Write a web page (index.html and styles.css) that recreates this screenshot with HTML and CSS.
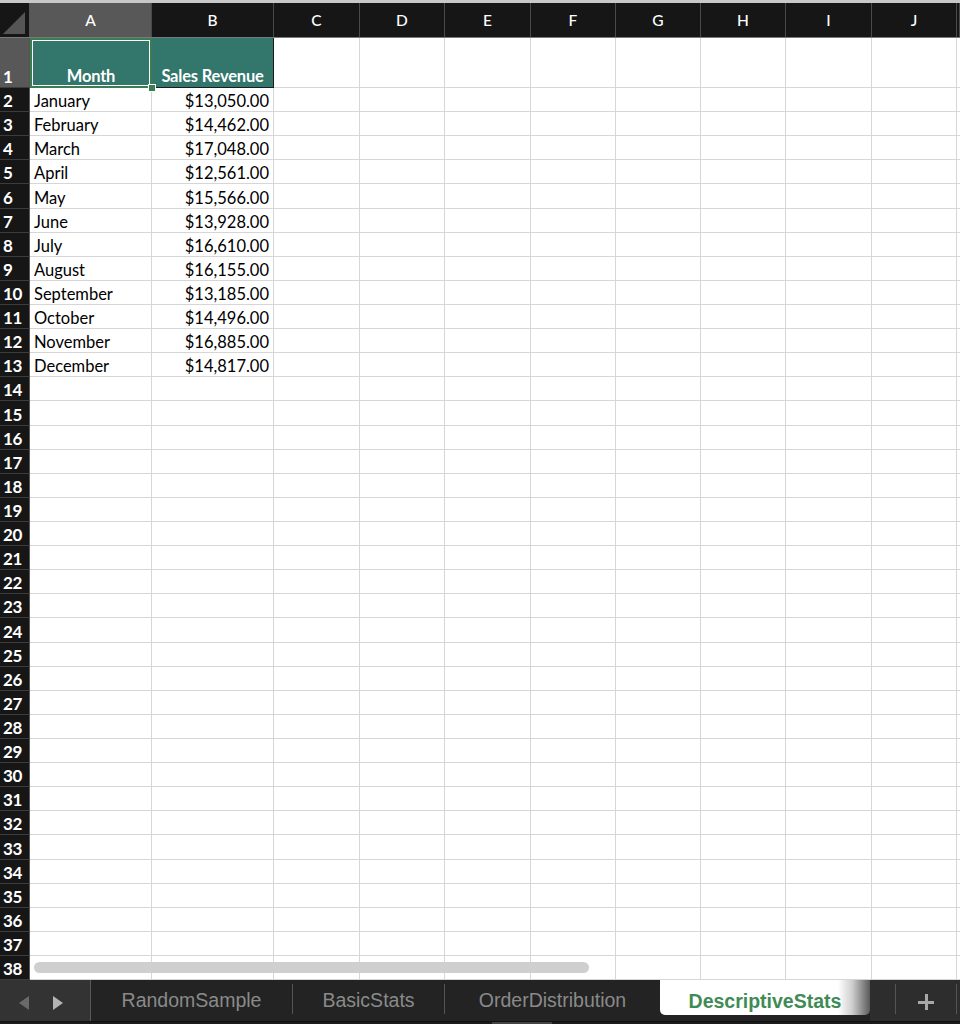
FILE: index.html
```html
<!DOCTYPE html>
<html>
<head>
<meta charset="utf-8">
<link rel="stylesheet" href="styles.css">
</head>
<body>
<div class="app">
  <div class="topstrip"></div>
  <div class="sheet">
    <div class="hdr">
      <div class="corner"><span class="tri"></span></div>
      <div class="ch sel">A</div><div class="ch">B</div><div class="ch">C</div><div class="ch">D</div><div class="ch">E</div><div class="ch">F</div><div class="ch">G</div><div class="ch">H</div><div class="ch">I</div><div class="ch">J</div><div class="ch"></div>
    </div>
    <div class="row row1">
      <div class="rh sel">1</div>
      <div class="cell th active">Month</div>
      <div class="cell th">Sales Revenue</div>
      <div class="cell"></div><div class="cell"></div><div class="cell"></div><div class="cell"></div><div class="cell"></div><div class="cell"></div><div class="cell"></div><div class="cell"></div><div class="cell"></div>
      <span class="handle"></span>
    </div>
    <div class="row"><div class="rh">2</div><div class="cell">January</div><div class="cell num">$13,050.00</div><div class="cell"></div><div class="cell"></div><div class="cell"></div><div class="cell"></div><div class="cell"></div><div class="cell"></div><div class="cell"></div><div class="cell"></div><div class="cell"></div></div>
    <div class="row"><div class="rh">3</div><div class="cell">February</div><div class="cell num">$14,462.00</div><div class="cell"></div><div class="cell"></div><div class="cell"></div><div class="cell"></div><div class="cell"></div><div class="cell"></div><div class="cell"></div><div class="cell"></div><div class="cell"></div></div>
    <div class="row"><div class="rh">4</div><div class="cell">March</div><div class="cell num">$17,048.00</div><div class="cell"></div><div class="cell"></div><div class="cell"></div><div class="cell"></div><div class="cell"></div><div class="cell"></div><div class="cell"></div><div class="cell"></div><div class="cell"></div></div>
    <div class="row"><div class="rh">5</div><div class="cell">April</div><div class="cell num">$12,561.00</div><div class="cell"></div><div class="cell"></div><div class="cell"></div><div class="cell"></div><div class="cell"></div><div class="cell"></div><div class="cell"></div><div class="cell"></div><div class="cell"></div></div>
    <div class="row"><div class="rh">6</div><div class="cell">May</div><div class="cell num">$15,566.00</div><div class="cell"></div><div class="cell"></div><div class="cell"></div><div class="cell"></div><div class="cell"></div><div class="cell"></div><div class="cell"></div><div class="cell"></div><div class="cell"></div></div>
    <div class="row"><div class="rh">7</div><div class="cell">June</div><div class="cell num">$13,928.00</div><div class="cell"></div><div class="cell"></div><div class="cell"></div><div class="cell"></div><div class="cell"></div><div class="cell"></div><div class="cell"></div><div class="cell"></div><div class="cell"></div></div>
    <div class="row"><div class="rh">8</div><div class="cell">July</div><div class="cell num">$16,610.00</div><div class="cell"></div><div class="cell"></div><div class="cell"></div><div class="cell"></div><div class="cell"></div><div class="cell"></div><div class="cell"></div><div class="cell"></div><div class="cell"></div></div>
    <div class="row"><div class="rh">9</div><div class="cell">August</div><div class="cell num">$16,155.00</div><div class="cell"></div><div class="cell"></div><div class="cell"></div><div class="cell"></div><div class="cell"></div><div class="cell"></div><div class="cell"></div><div class="cell"></div><div class="cell"></div></div>
    <div class="row"><div class="rh">10</div><div class="cell">September</div><div class="cell num">$13,185.00</div><div class="cell"></div><div class="cell"></div><div class="cell"></div><div class="cell"></div><div class="cell"></div><div class="cell"></div><div class="cell"></div><div class="cell"></div><div class="cell"></div></div>
    <div class="row"><div class="rh">11</div><div class="cell">October</div><div class="cell num">$14,496.00</div><div class="cell"></div><div class="cell"></div><div class="cell"></div><div class="cell"></div><div class="cell"></div><div class="cell"></div><div class="cell"></div><div class="cell"></div><div class="cell"></div></div>
    <div class="row"><div class="rh">12</div><div class="cell">November</div><div class="cell num">$16,885.00</div><div class="cell"></div><div class="cell"></div><div class="cell"></div><div class="cell"></div><div class="cell"></div><div class="cell"></div><div class="cell"></div><div class="cell"></div><div class="cell"></div></div>
    <div class="row"><div class="rh">13</div><div class="cell">December</div><div class="cell num">$14,817.00</div><div class="cell"></div><div class="cell"></div><div class="cell"></div><div class="cell"></div><div class="cell"></div><div class="cell"></div><div class="cell"></div><div class="cell"></div><div class="cell"></div></div>
    <div class="row"><div class="rh">14</div><div class="cell"></div><div class="cell"></div><div class="cell"></div><div class="cell"></div><div class="cell"></div><div class="cell"></div><div class="cell"></div><div class="cell"></div><div class="cell"></div><div class="cell"></div><div class="cell"></div></div>
    <div class="row"><div class="rh">15</div><div class="cell"></div><div class="cell"></div><div class="cell"></div><div class="cell"></div><div class="cell"></div><div class="cell"></div><div class="cell"></div><div class="cell"></div><div class="cell"></div><div class="cell"></div><div class="cell"></div></div>
    <div class="row"><div class="rh">16</div><div class="cell"></div><div class="cell"></div><div class="cell"></div><div class="cell"></div><div class="cell"></div><div class="cell"></div><div class="cell"></div><div class="cell"></div><div class="cell"></div><div class="cell"></div><div class="cell"></div></div>
    <div class="row"><div class="rh">17</div><div class="cell"></div><div class="cell"></div><div class="cell"></div><div class="cell"></div><div class="cell"></div><div class="cell"></div><div class="cell"></div><div class="cell"></div><div class="cell"></div><div class="cell"></div><div class="cell"></div></div>
    <div class="row"><div class="rh">18</div><div class="cell"></div><div class="cell"></div><div class="cell"></div><div class="cell"></div><div class="cell"></div><div class="cell"></div><div class="cell"></div><div class="cell"></div><div class="cell"></div><div class="cell"></div><div class="cell"></div></div>
    <div class="row"><div class="rh">19</div><div class="cell"></div><div class="cell"></div><div class="cell"></div><div class="cell"></div><div class="cell"></div><div class="cell"></div><div class="cell"></div><div class="cell"></div><div class="cell"></div><div class="cell"></div><div class="cell"></div></div>
    <div class="row"><div class="rh">20</div><div class="cell"></div><div class="cell"></div><div class="cell"></div><div class="cell"></div><div class="cell"></div><div class="cell"></div><div class="cell"></div><div class="cell"></div><div class="cell"></div><div class="cell"></div><div class="cell"></div></div>
    <div class="row"><div class="rh">21</div><div class="cell"></div><div class="cell"></div><div class="cell"></div><div class="cell"></div><div class="cell"></div><div class="cell"></div><div class="cell"></div><div class="cell"></div><div class="cell"></div><div class="cell"></div><div class="cell"></div></div>
    <div class="row"><div class="rh">22</div><div class="cell"></div><div class="cell"></div><div class="cell"></div><div class="cell"></div><div class="cell"></div><div class="cell"></div><div class="cell"></div><div class="cell"></div><div class="cell"></div><div class="cell"></div><div class="cell"></div></div>
    <div class="row"><div class="rh">23</div><div class="cell"></div><div class="cell"></div><div class="cell"></div><div class="cell"></div><div class="cell"></div><div class="cell"></div><div class="cell"></div><div class="cell"></div><div class="cell"></div><div class="cell"></div><div class="cell"></div></div>
    <div class="row"><div class="rh">24</div><div class="cell"></div><div class="cell"></div><div class="cell"></div><div class="cell"></div><div class="cell"></div><div class="cell"></div><div class="cell"></div><div class="cell"></div><div class="cell"></div><div class="cell"></div><div class="cell"></div></div>
    <div class="row"><div class="rh">25</div><div class="cell"></div><div class="cell"></div><div class="cell"></div><div class="cell"></div><div class="cell"></div><div class="cell"></div><div class="cell"></div><div class="cell"></div><div class="cell"></div><div class="cell"></div><div class="cell"></div></div>
    <div class="row"><div class="rh">26</div><div class="cell"></div><div class="cell"></div><div class="cell"></div><div class="cell"></div><div class="cell"></div><div class="cell"></div><div class="cell"></div><div class="cell"></div><div class="cell"></div><div class="cell"></div><div class="cell"></div></div>
    <div class="row"><div class="rh">27</div><div class="cell"></div><div class="cell"></div><div class="cell"></div><div class="cell"></div><div class="cell"></div><div class="cell"></div><div class="cell"></div><div class="cell"></div><div class="cell"></div><div class="cell"></div><div class="cell"></div></div>
    <div class="row"><div class="rh">28</div><div class="cell"></div><div class="cell"></div><div class="cell"></div><div class="cell"></div><div class="cell"></div><div class="cell"></div><div class="cell"></div><div class="cell"></div><div class="cell"></div><div class="cell"></div><div class="cell"></div></div>
    <div class="row"><div class="rh">29</div><div class="cell"></div><div class="cell"></div><div class="cell"></div><div class="cell"></div><div class="cell"></div><div class="cell"></div><div class="cell"></div><div class="cell"></div><div class="cell"></div><div class="cell"></div><div class="cell"></div></div>
    <div class="row"><div class="rh">30</div><div class="cell"></div><div class="cell"></div><div class="cell"></div><div class="cell"></div><div class="cell"></div><div class="cell"></div><div class="cell"></div><div class="cell"></div><div class="cell"></div><div class="cell"></div><div class="cell"></div></div>
    <div class="row"><div class="rh">31</div><div class="cell"></div><div class="cell"></div><div class="cell"></div><div class="cell"></div><div class="cell"></div><div class="cell"></div><div class="cell"></div><div class="cell"></div><div class="cell"></div><div class="cell"></div><div class="cell"></div></div>
    <div class="row"><div class="rh">32</div><div class="cell"></div><div class="cell"></div><div class="cell"></div><div class="cell"></div><div class="cell"></div><div class="cell"></div><div class="cell"></div><div class="cell"></div><div class="cell"></div><div class="cell"></div><div class="cell"></div></div>
    <div class="row"><div class="rh">33</div><div class="cell"></div><div class="cell"></div><div class="cell"></div><div class="cell"></div><div class="cell"></div><div class="cell"></div><div class="cell"></div><div class="cell"></div><div class="cell"></div><div class="cell"></div><div class="cell"></div></div>
    <div class="row"><div class="rh">34</div><div class="cell"></div><div class="cell"></div><div class="cell"></div><div class="cell"></div><div class="cell"></div><div class="cell"></div><div class="cell"></div><div class="cell"></div><div class="cell"></div><div class="cell"></div><div class="cell"></div></div>
    <div class="row"><div class="rh">35</div><div class="cell"></div><div class="cell"></div><div class="cell"></div><div class="cell"></div><div class="cell"></div><div class="cell"></div><div class="cell"></div><div class="cell"></div><div class="cell"></div><div class="cell"></div><div class="cell"></div></div>
    <div class="row"><div class="rh">36</div><div class="cell"></div><div class="cell"></div><div class="cell"></div><div class="cell"></div><div class="cell"></div><div class="cell"></div><div class="cell"></div><div class="cell"></div><div class="cell"></div><div class="cell"></div><div class="cell"></div></div>
    <div class="row"><div class="rh">37</div><div class="cell"></div><div class="cell"></div><div class="cell"></div><div class="cell"></div><div class="cell"></div><div class="cell"></div><div class="cell"></div><div class="cell"></div><div class="cell"></div><div class="cell"></div><div class="cell"></div></div>
    <div class="row"><div class="rh">38</div><div class="cell"></div><div class="cell"></div><div class="cell"></div><div class="cell"></div><div class="cell"></div><div class="cell"></div><div class="cell"></div><div class="cell"></div><div class="cell"></div><div class="cell"></div><div class="cell"></div></div>
    <div class="hscroll"></div>
  </div>
  <div class="tabbar">
    <div class="navs">
      <svg class="arrow" width="12" height="14" viewBox="0 0 12 14"><polygon points="11,0 11,14 1,7" fill="#6a6a6a"/></svg>
      <svg class="arrow" width="12" height="14" viewBox="0 0 12 14"><polygon points="1,0 1,14 11,7" fill="#b4b4b4"/></svg>
    </div>
    <div class="tab t1">RandomSample</div>
    <div class="tab t2">BasicStats</div>
    <div class="tab t3">OrderDistribution</div>
    <div class="tab active">DescriptiveStats</div>
    <div class="tabrest">
      <div class="gap"></div>
      <div class="add"><span class="plus"></span></div>
      <div class="gap2"></div>
    </div>
  </div>
  <div class="bottomstrip"><span class="thumb"></span></div>
</div>
</body>
</html>
```
FILE: styles.css
```css
* { box-sizing: border-box; }
html, body { margin: 0; padding: 0; }
body {
  width: 960px;
  height: 1024px;
  overflow: hidden;
  background: #fff;
  font-family: "Lato", "Noto Sans", sans-serif;
}
.app {
  display: flex;
  flex-direction: column;
  height: 1024px;
}
.topstrip {
  height: 3px;
  background: #c8c8c8;
}
.sheet {
  position: relative;
  --cols: 30px 122px 122px 86px 85px 86px 85px 85px 85px 86px 85px 3px;
}
.hdr {
  display: grid;
  grid-template-columns: var(--cols);
  height: 35px;
  background: #161616;
  border-bottom: 1px solid #7a7a7a;
}
.corner {
  position: relative;
  border-right: 1px solid #555;
  background: #161616;
}
.corner .tri {
  position: absolute;
  right: 4px;
  bottom: 3px;
  width: 0;
  height: 0;
  border-left: 22px solid transparent;
  border-bottom: 22px solid #555;
}
.ch {
  display: flex;
  align-items: center;
  justify-content: center;
  color: #fff;
  font-size: 15.5px;
  font-weight: 500;
  border-right: 1px solid #4a4a4a;
  padding-bottom: 1px;
}
.ch.sel { background: #585858; }
.row {
  position: relative;
  display: grid;
  grid-template-columns: var(--cols);
  height: 24.12px;
}
.row1 { height: 50px; }
.rh {
  display: flex;
  align-items: flex-end;
  background: #161616;
  color: #fff;
  font-weight: 700;
  font-size: 17px;
  padding: 0 0 0 3px;
  border-bottom: 1px solid #3c3c3c;
  border-right: 1px solid #555;
  letter-spacing: -0.3px;
}
.rh.sel { background: #585858; }
.cell {
  display: flex;
  align-items: flex-end;
  padding: 0 4px 0 4px;
  border-right: 1px solid #d6d6d6;
  border-bottom: 1px solid #d6d6d6;
  color: #000;
  font-size: 16.5px;
  white-space: nowrap;
  overflow: hidden;
}
.cell.num { justify-content: flex-end; }
.cell.th {
  background: #33766b;
  color: #fff;
  font-weight: 700;
  justify-content: center;
  border-right: 1px solid #1c1c1c;
  border-bottom: 1px solid #1c1c1c;
  padding-bottom: 1px;
  letter-spacing: -0.2px;
}
.cell.th.active {
  border: 2px solid #3b7d50;
  box-shadow: inset 0 0 0 1px #fff;
  padding-bottom: 0;
}
.handle {
  position: absolute;
  left: 148px;
  top: 46px;
  width: 8px;
  height: 8px;
  background: #3b7d50;
  border: 1px solid #fff;
  z-index: 2;
}
.hscroll {
  position: absolute;
  left: 34px;
  top: 959px;
  width: 555px;
  height: 11px;
  border-radius: 6px;
  background: #cfcfcf;
}
.tabbar {
  display: flex;
  height: 41px;
  background: #232323;
  font-family: "Liberation Sans", Arial, sans-serif;
  font-size: 19.5px;
}
.navs {
  width: 91px;
  display: flex;
  align-items: center;
  justify-content: space-between;
  padding: 4px 26px 0 18px;
  background: #333;
  border-right: 1px solid #5a5a5a;
}
.arrow { display: block; }
.tab {
  display: flex;
  align-items: center;
  justify-content: center;
  color: #8a8a8a;
  padding-top: 2px;
}
.t1 { width: 202px; border-right: 1px solid #555; margin: 4px 0 7px; }
.t2 { width: 152px; border-right: 1px solid #555; margin: 4px 0 7px; }
.t3 { width: 215px; padding-top: 6px; padding-bottom: 7px; }
.tab.active {
  width: 210px;
  height: 35px;
  color: #3f8b55;
  font-weight: 700;
  border-radius: 0 0 5px 5px;
  background: linear-gradient(to right, #fff 0, #fff 178px, #cfcfcf 192px, #5a5a5a 210px);
  padding-top: 7px;
}
.tabrest {
  flex: 1;
  display: flex;
  background: #2d2d2d;
}
.gap {
  width: 26px;
  border-right: 1px solid #555;
  margin: 4px 0 7px;
}
.add {
  width: 61px;
  display: flex;
  align-items: center;
  justify-content: center;
  border-right: 1px solid #555;
  margin: 4px 0 7px;
  padding-top: 6px;
}
.plus {
  position: relative;
  width: 16px;
  height: 16px;
}
.plus::before, .plus::after {
  content: "";
  position: absolute;
  background: #a8a8a8;
}
.plus::before { left: 0; top: 6.5px; width: 16px; height: 3px; }
.plus::after { left: 6.5px; top: 0; width: 3px; height: 16px; }
.gap2 { flex: 1; }
.bottomstrip {
  flex: 1;
  position: relative;
  background: #1b1b1b;
  border-top: 1px solid #111;
}
.thumb {
  position: absolute;
  left: 492px;
  top: 0;
  width: 60px;
  height: 100%;
  background: #444;
}
```
